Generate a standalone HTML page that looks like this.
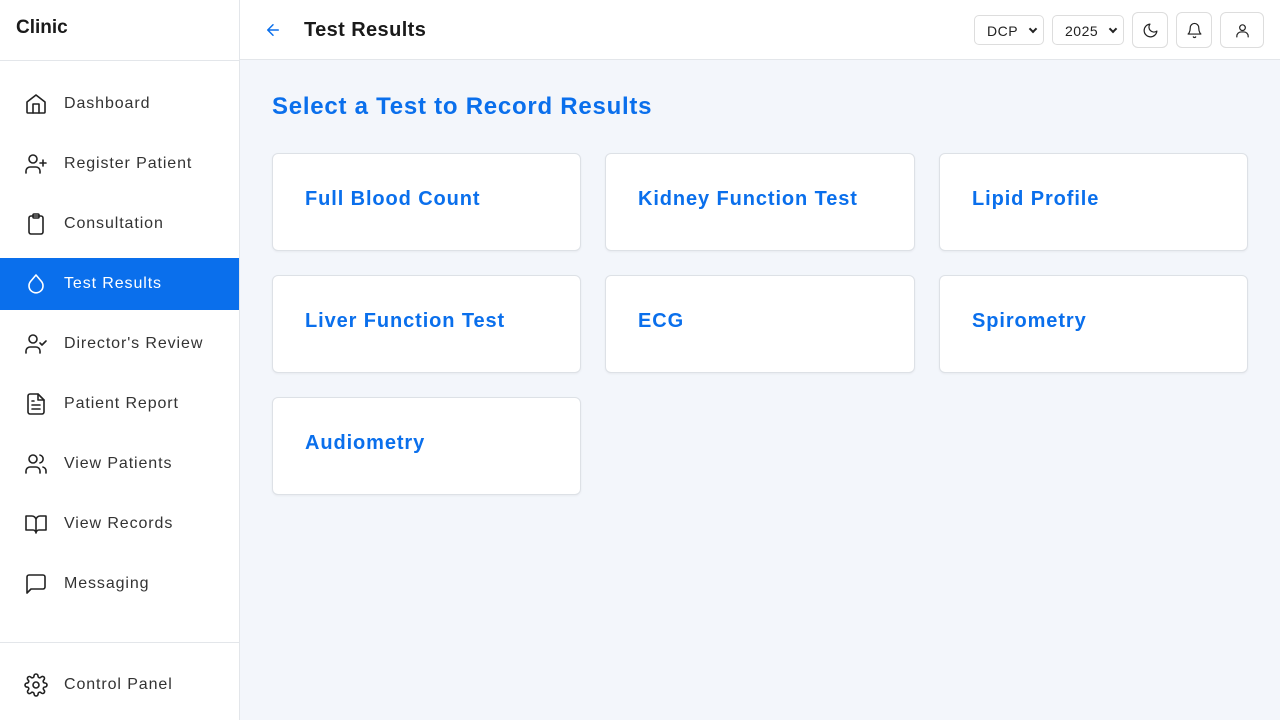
<!DOCTYPE html>
<html><head><style>
*{box-sizing:border-box;margin:0;padding:0}
body{width:1280px;height:720px;overflow:hidden;font-family:"Liberation Sans",sans-serif;background:#f3f6fb;position:relative;color:#1a1a1a}
.sb{position:absolute;left:0;top:0;width:240px;height:720px;background:#fff;border-right:1px solid #e3e6ea}
.logo{position:absolute;left:16px;top:17px;font-weight:bold;font-size:19px}
.sb .hr{position:absolute;left:0;width:239px;height:1px;background:#e3e6ea}
.it{position:absolute;left:0;width:239px;height:52px;display:flex;align-items:center;font-size:16px;color:#333;letter-spacing:0.9px}
.it svg{position:absolute;left:24px;width:24px;height:24px;fill:none;stroke:#222;stroke-width:1.6;stroke-linecap:round;stroke-linejoin:round}
.it span{position:absolute;left:64px;top:17px}
.it.act{background:#0a6fec;color:#fff}
.it.act svg{stroke:#fff}
.top{position:absolute;left:240px;top:0;right:0;height:60px;background:#fff;border-bottom:1px solid #e3e6ea}
.title{position:absolute;left:64px;top:19px;font-size:20px;font-weight:bold;letter-spacing:0.4px}
.sel{position:absolute;top:15px;height:30px;border:1px solid #ddd;border-radius:5px;font-size:14px;padding:7px 0 0 12px;color:#222;letter-spacing:0.5px}
.sel b{position:absolute;right:7px;top:10px;width:6px;height:6px;border-right:2px solid #222;border-bottom:2px solid #222;transform:rotate(45deg)}
.btn{position:absolute;top:12px;width:36px;height:36px;border:1px solid #ddd;border-radius:6px}
.btn svg{position:absolute;left:9px;top:9px;width:17px;height:17px;fill:none;stroke:#222;stroke-width:1.7;stroke-linecap:round;stroke-linejoin:round}
h1{position:absolute;left:272px;top:93px;font-size:24px;color:#0a6fec;font-weight:bold;letter-spacing:0.75px}
.card{position:absolute;width:309px;height:98px;background:#fff;border:1px solid #dde1e6;border-radius:6px;box-shadow:0 1px 2px rgba(0,0,0,.05)}
.card span{position:absolute;left:32px;top:34px;font-size:20px;font-weight:bold;color:#0a6fec;letter-spacing:0.9px}
</style></head><body>
<div class="sb">
<div class="logo">Clinic</div>
<div class="hr" style="top:60px"></div>
<div class="it" style="top:78px"><svg viewBox="0 0 24 24"><path d="M3 10l9-7 9 7v10a1 1 0 0 1-1 1H4a1 1 0 0 1-1-1z"/><path d="M9 21v-9h6v9"/></svg><span>Dashboard</span></div>
<div class="it" style="top:138px"><svg viewBox="0 0 24 24"><circle cx="9" cy="7" r="4"/><path d="M2 21v-2a4 4 0 0 1 4-4h6a4 4 0 0 1 4 4v2M19 8v6M16 11h6"/></svg><span>Register Patient</span></div>
<div class="it" style="top:198px"><svg viewBox="0 0 24 24"><rect x="5" y="4" width="14" height="18" rx="2"/><rect x="9" y="2" width="6" height="4" rx="1"/></svg><span>Consultation</span></div>
<div class="it act" style="top:258px"><svg viewBox="0 0 24 24"><path d="M12 3l5.5 6.5a7 7 0 1 1-11 0z"/></svg><span>Test Results</span></div>
<div class="it" style="top:318px"><svg viewBox="0 0 24 24"><circle cx="9" cy="7" r="4"/><path d="M2 21v-2a4 4 0 0 1 4-4h6a4 4 0 0 1 4 4v2M16 11l2 2 4-4"/></svg><span>Director's Review</span></div>
<div class="it" style="top:378px"><svg viewBox="0 0 24 24"><path d="M14 2H6a2 2 0 0 0-2 2v16a2 2 0 0 0 2 2h12a2 2 0 0 0 2-2V8z"/><path d="M14 2v6h6M8 13h8M8 17h8M8 9h2"/></svg><span>Patient Report</span></div>
<div class="it" style="top:438px"><svg viewBox="0 0 24 24"><circle cx="9" cy="7" r="4"/><path d="M2 21v-2a4 4 0 0 1 4-4h6a4 4 0 0 1 4 4v2M16 3.1a4 4 0 0 1 0 7.8M22 21v-2a4 4 0 0 0-3-3.9"/></svg><span>View Patients</span></div>
<div class="it" style="top:498px"><svg viewBox="0 0 24 24"><path d="M2 4h6a4 4 0 0 1 4 4v13a3 3 0 0 0-3-3H2zM22 4h-6a4 4 0 0 0-4 4v13a3 3 0 0 1 3-3h7z"/></svg><span>View Records</span></div>
<div class="it" style="top:558px"><svg viewBox="0 0 24 24"><path d="M21 15a2 2 0 0 1-2 2H7l-4 4V5a2 2 0 0 1 2-2h14a2 2 0 0 1 2 2z"/></svg><span>Messaging</span></div>
<div class="hr" style="top:642px"></div>
<div class="it" style="top:659px"><svg viewBox="0 0 24 24"><circle cx="12" cy="12" r="3"/><path d="M19.4 15a1.7 1.7 0 0 0 .3 1.8l.1.1a2 2 0 1 1-2.8 2.8l-.1-.1a1.7 1.7 0 0 0-1.8-.3 1.7 1.7 0 0 0-1 1.5V21a2 2 0 1 1-4 0v-.1a1.7 1.7 0 0 0-1.1-1.5 1.7 1.7 0 0 0-1.8.3l-.1.1a2 2 0 1 1-2.8-2.8l.1-.1a1.7 1.7 0 0 0 .3-1.8 1.7 1.7 0 0 0-1.5-1H3a2 2 0 1 1 0-4h.1a1.7 1.7 0 0 0 1.5-1.1 1.7 1.7 0 0 0-.3-1.8l-.1-.1a2 2 0 1 1 2.8-2.8l.1.1a1.7 1.7 0 0 0 1.8.3H9a1.7 1.7 0 0 0 1-1.5V3a2 2 0 1 1 4 0v.1a1.7 1.7 0 0 0 1 1.5 1.7 1.7 0 0 0 1.8-.3l.1-.1a2 2 0 1 1 2.8 2.8l-.1.1a1.7 1.7 0 0 0-.3 1.8V9a1.7 1.7 0 0 0 1.5 1H21a2 2 0 1 1 0 4h-.1a1.7 1.7 0 0 0-1.5 1z"/></svg><span>Control Panel</span></div>
</div>
<div class="top">
<svg style="position:absolute;left:24px;top:21px" width="18" height="18" viewBox="0 0 24 24" fill="none" stroke="#0a6fec" stroke-width="2" stroke-linecap="round" stroke-linejoin="round"><path d="M19 12H5M12 19l-7-7 7-7"/></svg>
<div class="title">Test Results</div>
<div class="sel" style="left:734px;width:70px">DCP<b></b></div>
<div class="sel" style="left:812px;width:72px">2025<b></b></div>
<div class="btn" style="left:892px"><svg viewBox="0 0 24 24"><path d="M21 12.8A9 9 0 1 1 11.2 3a7 7 0 0 0 9.8 9.8z"/></svg></div>
<div class="btn" style="left:936px"><svg viewBox="0 0 24 24"><path d="M18 8A6 6 0 0 0 6 8c0 7-3 9-3 9h18s-3-2-3-9M13.7 21a2 2 0 0 1-3.4 0"/></svg></div>
<div class="btn" style="left:980px;width:44px"><svg viewBox="0 0 24 24" style="left:13px"><circle cx="12" cy="8" r="4"/><path d="M4 21v-1a6 6 0 0 1 6-6h4a6 6 0 0 1 6 6v1"/></svg></div>
</div>
<h1>Select a Test to Record Results</h1>
<div class="card" style="left:272px;top:153px"><span>Full Blood Count</span></div>
<div class="card" style="left:605px;top:153px;width:310px"><span>Kidney Function Test</span></div>
<div class="card" style="left:939px;top:153px"><span>Lipid Profile</span></div>
<div class="card" style="left:272px;top:275px"><span>Liver Function Test</span></div>
<div class="card" style="left:605px;top:275px;width:310px"><span>ECG</span></div>
<div class="card" style="left:939px;top:275px"><span>Spirometry</span></div>
<div class="card" style="left:272px;top:397px"><span>Audiometry</span></div>
</body></html>
